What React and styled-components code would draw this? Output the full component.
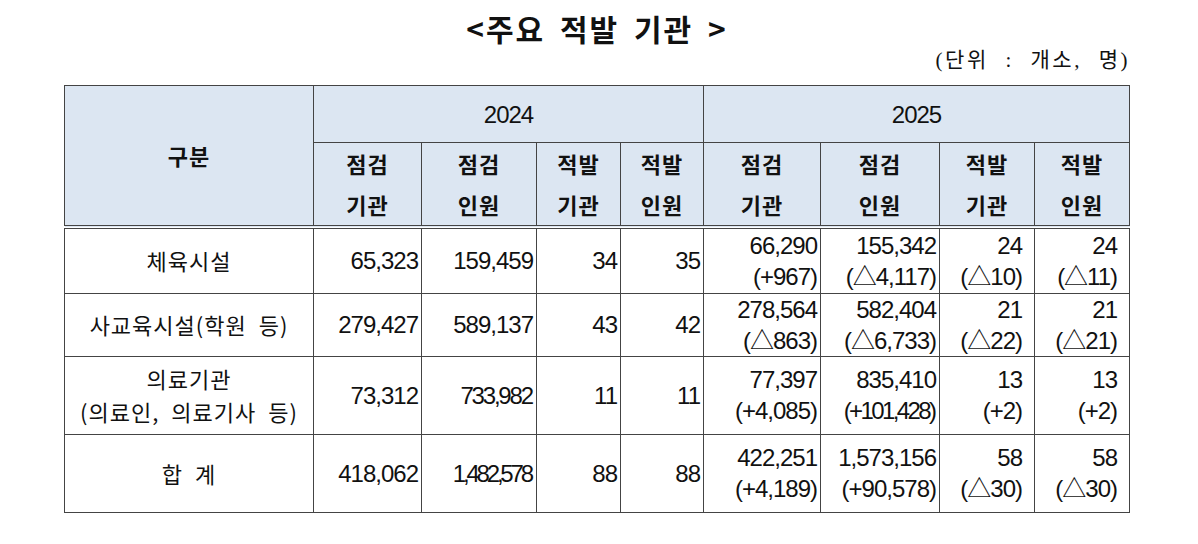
import React from 'react';
import styled, { createGlobalStyle } from 'styled-components';

const GlobalStyle = createGlobalStyle`
  body {
    margin: 0;
    background: #fff;
    font-family: "Liberation Sans", "Noto Sans CJK KR", sans-serif;
    color: #111;
  }
`;

const Page = styled.div`
  width: 1066px;
  padding: 9px 0 0 64px;
`;

const Title = styled.h1`
  margin: 0;
  font-family: "Noto Sans CJK KR", sans-serif;
  font-size: 30px;
  font-weight: 700;
  line-height: 38px;
  text-align: center;
  letter-spacing: 2px;
  word-spacing: 6px;
`;

const Unit = styled.div`
  text-align: right;
  font-family: "Liberation Serif", "Noto Sans CJK KR", serif;
  font-size: 21px;
  line-height: 26px;
  margin: 0 0 12px;
  letter-spacing: 2.5px;
  word-spacing: 9px;
`;

const Table = styled.table`
  width: 1066px;
  border-collapse: collapse;
  table-layout: fixed;
  border: 1px solid #777;
`;

const HeadCell = styled.th`
  background: #dce6f2;
  border: 1px solid #444;
  font-family: "Noto Sans CJK KR", sans-serif;
  font-weight: 700;
  font-size: 22px;
  letter-spacing: 1px;
  line-height: 41px;
  text-align: center;
  vertical-align: middle;
  padding: 0;
  height: ${(p) => p.h || 'auto'};
  ${(p) => p.year && `
    font-family: "Liberation Sans", sans-serif;
    font-weight: 400;
    font-size: 24px;
    letter-spacing: -1px;
  `}
  ${(p) => p.under && `border-bottom: 4px double #444;`}
`;

const Row = styled.tr`
  height: ${(p) => p.h}px;
`;

const Label = styled.td`
  border: 1px solid #444;
  font-family: "Noto Sans CJK KR", sans-serif;
  font-size: 22px;
  letter-spacing: 1px;
  line-height: 33px;
  text-align: center;
  vertical-align: middle;
  padding: 0;
  word-spacing: 6px;
`;

const Num = styled.td`
  border: 1px solid #444;
  font-family: "Liberation Sans", "Noto Sans CJK KR", sans-serif;
  font-size: 24px;
  letter-spacing: -1px;
  line-height: 31px;
  text-align: right;
  vertical-align: middle;
  padding: 0 ${(p) => (p.wide ? 12 : 3)}px 0 0;
`;

const Sub = styled.div`
  white-space: nowrap;
  ${(p) => p.squeeze && `letter-spacing: ${p.squeeze}px; padding-right: ${-p.squeeze - 1}px;`}
`;

// cells the source document squeezed to fit
const squeezed = { '733,982': -2.2, '1,482,578': -3.2, '(+101,428)': -2.6 };

const rows = [
  {
    h: 66,
    label: ['체육시설'],
    y24: ['65,323', '159,459', '34', '35'],
    y25: [['66,290', '(+967)'], ['155,342', '(△4,117)'], ['24', '(△10)'], ['24', '(△11)']],
  },
  {
    h: 63,
    label: ['사교육시설(학원 등)'],
    y24: ['279,427', '589,137', '43', '42'],
    y25: [['278,564', '(△863)'], ['582,404', '(△6,733)'], ['21', '(△22)'], ['21', '(△21)']],
  },
  {
    h: 78,
    label: ['의료기관', '(의료인, 의료기사 등)'],
    y24: ['73,312', '733,982', '11', '11'],
    y25: [['77,397', '(+4,085)'], ['835,410', '(+101,428)'], ['13', '(+2)'], ['13', '(+2)']],
  },
  {
    h: 78,
    label: ['합 계'],
    y24: ['418,062', '1,482,578', '88', '88'],
    y25: [['422,251', '(+4,189)'], ['1,573,156', '(+90,578)'], ['58', '(△30)'], ['58', '(△30)']],
  },
];

const subHeads = [['점검', '기관'], ['점검', '인원'], ['적발', '기관'], ['적발', '인원']];
const widths = [249, 108, 115, 84, 83, 117, 119, 95, 95];

export default function App() {
  return (
    <>
      <GlobalStyle />
      <Page>
        <Title>&lt;주요 적발 기관 &gt;</Title>
        <Unit>(단위 : 개소, 명)</Unit>
        <Table>
          <colgroup>
            {widths.map((w, i) => (
              <col key={i} style={{ width: w }} />
            ))}
          </colgroup>
          <thead>
            <tr>
              <HeadCell rowSpan={2} under>구분</HeadCell>
              <HeadCell colSpan={4} year h="56px">2024</HeadCell>
              <HeadCell colSpan={4} year h="56px">2025</HeadCell>
            </tr>
            <tr>
              {[...subHeads, ...subHeads].map((s, i) => (
                <HeadCell key={i} under>
                  {s.map((t) => (
                    <Sub key={t}>{t}</Sub>
                  ))}
                </HeadCell>
              ))}
            </tr>
          </thead>
          <tbody>
            {rows.map((r, i) => (
              <Row key={i} h={r.h}>
                <Label>
                  {r.label.map((t) => (
                    <Sub key={t}>{t}</Sub>
                  ))}
                </Label>
                {r.y24.map((v, j) => (
                  <Num key={j}>
                    <Sub squeeze={squeezed[v]}>{v}</Sub>
                  </Num>
                ))}
                {r.y25.map((v, j) => (
                  <Num key={j} wide={j >= 2}>
                    {v.map((t) => (
                      <Sub key={t} squeeze={squeezed[t]}>{t}</Sub>
                    ))}
                  </Num>
                ))}
              </Row>
            ))}
          </tbody>
        </Table>
      </Page>
    </>
  );
}
